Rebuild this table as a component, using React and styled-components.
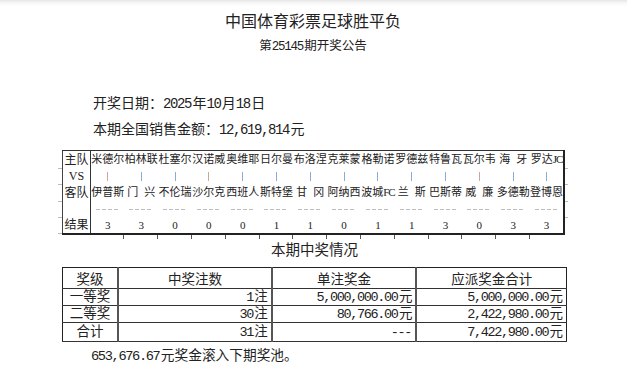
import React from "react";
import styled, { createGlobalStyle } from "styled-components";

const Global = createGlobalStyle`
  html, body { margin: 0; padding: 0; background: #fff; }
  body { font-family: "Liberation Serif", "Noto Sans CJK SC", serif; color: #1a1a1a; }
`;

const Page = styled.div`
  width: 627px;
  height: 372px;
  overflow: hidden;
  background: linear-gradient(#e6e6e6 0px, #f7f7f7 3px, #fff 6px);
  display: flex;
  flex-direction: column;
`;

const Num = styled.span`
  font-family: "Liberation Mono", monospace;
  letter-spacing: -0.1em;
  margin-right: 0.1em;
`;

const Header = styled.header`
  width: 502px;
  margin-left: 62px;
  padding-top: 12px;
  display: flex;
  flex-direction: column;
  align-items: center;
`;

const Title = styled.h1`
  margin: 0;
  font-weight: normal;
  font-size: 16px;
  line-height: 20px;
  color: #222;
`;

const Subtitle = styled.h2`
  margin: 4px 0 0;
  font-weight: normal;
  font-size: 12.5px;
  line-height: 20px;
  color: #222;
`;

const Info = styled.div`
  margin-top: 34px;
  padding-left: 93px;
  display: flex;
  flex-direction: column;
`;

const InfoLine = styled.p`
  margin: 0;
  font-size: 14px;
  line-height: 25px;
  color: #222;
`;

const MatchTable = styled.table`
  margin: 7px 0 0 62px;
  width: 503px;
  table-layout: fixed;
  border-collapse: collapse;
  border-top: 1px solid #333;
  border-left: 1px solid #444;
  border-right: 2px solid #222;
  border-bottom: 2px solid #222;
`;

const LabelCell = styled.td`
  width: 27px;
  padding: 0;
  height: ${(p) => p.$h}px;
  font-size: 12px;
  line-height: 1;
  text-align: center;
  white-space: nowrap;
  border-right: 1px solid #333;
  color: #222;
  position: relative;
  &::before {
    content: "";
    position: absolute;
    left: -5px;
    bottom: -1px;
    width: 4px;
    height: 1px;
    background: #bbb;
  }
`;

const TeamCell = styled.td`
  padding: 0;
  height: ${(p) => p.$h}px;
  font-size: 11px;
  line-height: 1;
  text-align: center;
  white-space: nowrap;
  color: #222;
  position: relative;
  &::after {
    content: "";
    display: ${(p) => (p.$tick ? "block" : "none")};
    position: absolute;
    right: 0;
    bottom: -6px;
    width: 1px;
    height: 4px;
    background: #555;
  }
`;

const TeamName = styled.span`
  display: inline-flex;
  gap: ${(p) => p.$gap}px;
`;

const Latin = styled.span`
  letter-spacing: -1px;
`;

const RightTick = styled.span`
  position: absolute;
  right: -5px;
  bottom: -1px;
  width: 3px;
  height: 1px;
  background: #bbb;
`;

const Bar = styled.span`
  display: inline-block;
  width: 1px;
  height: 9px;
  background: ${(p) => p.$color};
  vertical-align: middle;
`;

const Dash = styled.span`
  display: inline-block;
  width: 24px;
  height: 1px;
  background: repeating-linear-gradient(90deg, #bdbdbd 0 4px, transparent 4px 6px);
  vertical-align: middle;
`;

const SectionTitle = styled.h3`
  margin: 4px 0 0 62px;
  width: 505px;
  text-align: center;
  font-weight: normal;
  font-size: 14.5px;
  line-height: 22px;
  color: #222;
`;

const PrizeTable = styled.table`
  margin: 6px 0 0 62px;
  width: 505px;
  table-layout: fixed;
  border-collapse: collapse;
  border: 1.5px solid #222;
`;

const PrizeHead = styled.th`
  font-weight: normal;
  font-size: 13.5px;
  height: 18px;
  padding: 0;
  text-align: center;
  color: #222;
  width: ${(p) => p.$w}%;
  border-left: 2px solid #555;
  border-bottom: 1px solid #333;
  &:first-child { border-left: none; }
`;

const PrizeCell = styled.td`
  font-size: 13.5px;
  height: ${(p) => p.$h}px;
  padding: 0 ${(p) => (p.$align === "center" ? 0 : 3)}px 0 0;
  text-align: ${(p) => p.$align || "right"};
  color: #222;
  white-space: nowrap;
  border-left: 2px solid #555;
  border-bottom: 1px solid #333;
  line-height: 1;
  &:first-child { border-left: none; }
`;

const Footer = styled.p`
  margin: 4px 0 0 91px;
  font-size: 13.7px;
  line-height: 20px;
  color: #222;
`;

const home = [["米", "德", "尔"], ["柏", "林", "联"], ["杜", "塞", "尔"], ["汉", "诺", "威"], ["奥", "维", "耶"], ["日", "尔", "曼"], ["布", "洛", "涅"], ["克", "莱", "蒙"], ["格", "勒", "诺"], ["罗", "德", "兹"], ["特", "鲁", "瓦"], ["瓦", "尔", "韦"], ["海", "牙"], ["罗", "达", "JC"]];
const away = [["伊", "普", "斯"], ["门", "兴"], ["不", "伦", "瑞"], ["沙", "尔", "克"], ["西", "班", "人"], ["斯", "特", "堡"], ["甘", "冈"], ["阿", "纳", "西"], ["波", "城", "FC"], ["兰", "斯"], ["巴", "斯", "蒂"], ["威", "廉"], ["多", "德", "勒"], ["登", "博", "恩"]];
const results = ["3", "3", "0", "0", "0", "1", "1", "0", "1", "1", "3", "0", "3", "3"];
const barColors = ["#c9a89e", "#8eaad0", "#8eaad0", "#c9a89e", "#8eaad0", "#8eaad0", "#8eaad0", "#8eaad0", "#8eaad0", "#8eaad0", "#8eaad0", "#c9a89e", "#8eaad0", "#8eaad0"];

const rowH = [17, 16, 17, 16, 16];

const prizeRows = [
  { level: "一等奖", count: "1", unit: "5,000,000.00", total: "5,000,000.00", h: 16 },
  { level: "二等奖", count: "30", unit: "80,766.00", total: "2,422,980.00", h: 16 },
  { level: "合计", count: "31", unit: null, total: "7,422,980.00", h: 18 },
];

const Name = ({ parts }) => (
  <TeamName $gap={parts.length === 2 ? 6 : 0}>
    {parts.map((c, i) =>
      /[A-Z]/.test(c) ? <Latin key={i}>{c}</Latin> : <span key={i}>{c}</span>
    )}
  </TeamName>
);

export default function App() {
  return (
    <>
      <Global />
      <Page>
        <Header>
          <Title>中国体育彩票足球胜平负</Title>
          <Subtitle>
            第<Num>25145</Num>期开奖公告
          </Subtitle>
        </Header>
        <Info>
          <InfoLine>
            开奖日期：<Num>2025</Num>年<Num>10</Num>月<Num>18</Num>日
          </InfoLine>
          <InfoLine>
            本期全国销售金额：<Num>12,619,814</Num>元
          </InfoLine>
        </Info>
        <MatchTable>
          <tbody>
            <tr>
              <LabelCell $h={rowH[0]}>主队</LabelCell>
              {home.map((t, i) => (
                <TeamCell key={i} $h={rowH[0]}>
                  <Name parts={t} />
                  {i === home.length - 1 && <RightTick />}
                </TeamCell>
              ))}
            </tr>
            <tr>
              <LabelCell $h={rowH[1]}>VS</LabelCell>
              {barColors.map((c, i) => (
                <TeamCell key={i} $h={rowH[1]}>
                  <Bar $color={c} />
                  {i === home.length - 1 && <RightTick />}
                </TeamCell>
              ))}
            </tr>
            <tr>
              <LabelCell $h={rowH[2]}>客队</LabelCell>
              {away.map((t, i) => (
                <TeamCell key={i} $h={rowH[2]}>
                  <Name parts={t} />
                  {i === away.length - 1 && <RightTick />}
                </TeamCell>
              ))}
            </tr>
            <tr>
              <LabelCell $h={rowH[3]} />
              {away.map((_, i) => (
                <TeamCell key={i} $h={rowH[3]}>
                  <Dash />
                  {i === away.length - 1 && <RightTick />}
                </TeamCell>
              ))}
            </tr>
            <tr>
              <LabelCell $h={rowH[4]}>结果</LabelCell>
              {results.map((r, i) => (
                <TeamCell key={i} $h={rowH[4]} $tick={i < results.length - 1}>
                  {r}
                </TeamCell>
              ))}
            </tr>
          </tbody>
        </MatchTable>
        <SectionTitle>本期中奖情况</SectionTitle>
        <PrizeTable>
          <thead>
            <tr>
              <PrizeHead $w={10.9}>奖级</PrizeHead>
              <PrizeHead $w={30.5}>中奖注数</PrizeHead>
              <PrizeHead $w={28.7}>单注奖金</PrizeHead>
              <PrizeHead $w={29.9}>应派奖金合计</PrizeHead>
            </tr>
          </thead>
          <tbody>
            {prizeRows.map((r) => (
              <tr key={r.level}>
                <PrizeCell $h={r.h} $align="center">{r.level}</PrizeCell>
                <PrizeCell $h={r.h}>
                  <Num>{r.count}</Num>注
                </PrizeCell>
                <PrizeCell $h={r.h}>
                  {r.unit ? (
                    <>
                      <Num>{r.unit}</Num>元
                    </>
                  ) : (
                    <Num>---</Num>
                  )}
                </PrizeCell>
                <PrizeCell $h={r.h}>
                  <Num>{r.total}</Num>元
                </PrizeCell>
              </tr>
            ))}
          </tbody>
        </PrizeTable>
        <Footer>
          <Num>653,676.67</Num>元奖金滚入下期奖池。
        </Footer>
      </Page>
    </>
  );
}
